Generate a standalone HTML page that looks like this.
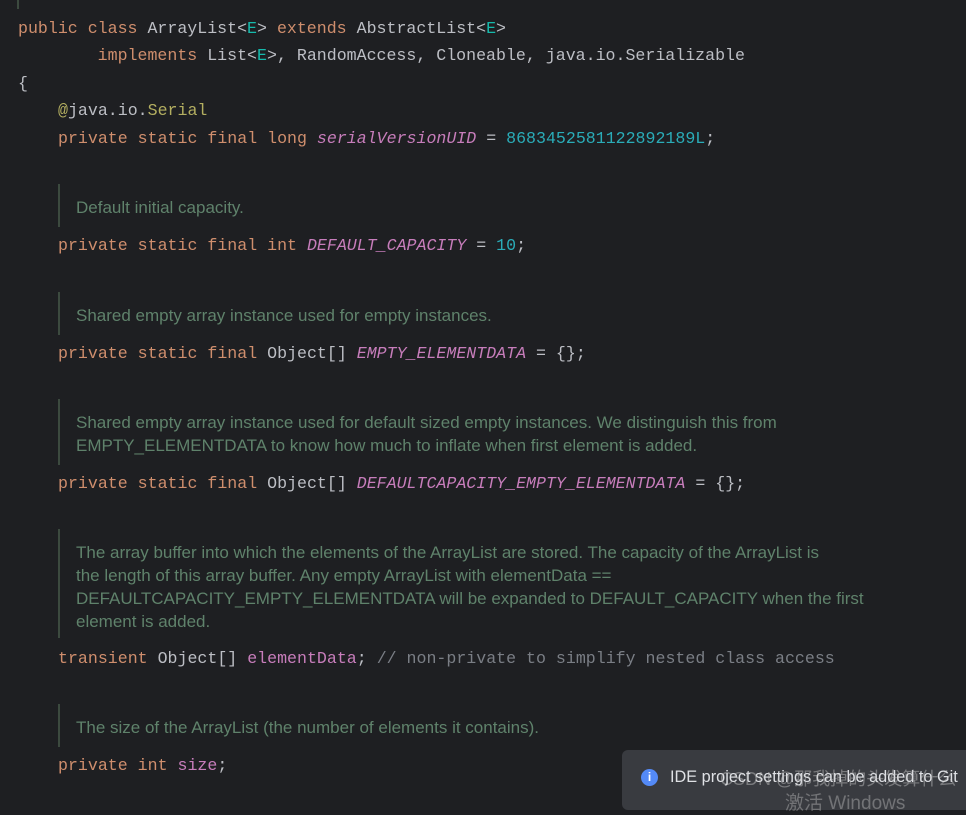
<!DOCTYPE html>
<html><head><meta charset="utf-8"><style>
html,body{margin:0;padding:0;width:966px;height:796px;overflow:hidden;background:#1e1f22;}
.c{position:absolute;font-family:"Liberation Mono",monospace;font-size:16.6px;color:#bcbec4;white-space:pre;line-height:20px;}
.k{color:#cf8e6d}.t{color:#16baac}.a{color:#b3ae60}.i{color:#c77dbb;font-style:italic}.f{color:#c77dbb}.n{color:#2aacb8}.g{color:#7a7e85}
.d{position:absolute;font-family:"Liberation Sans",sans-serif;font-size:17px;color:#5f826b;white-space:pre;line-height:23px;}
.bar{position:absolute;left:58px;width:2px;background:#3c4a3f;}
</style></head><body>
<div style="position:absolute;left:17px;top:0;width:2px;height:9px;background:#3c4a3f"></div>
<div class="c" style="left:18px;top:19px"><span class="k">public class </span>ArrayList&lt;<span class="t">E</span>&gt; <span class="k">extends </span>AbstractList&lt;<span class="t">E</span>&gt;</div>
<div class="c" style="left:18px;top:46px">        <span class="k">implements </span>List&lt;<span class="t">E</span>&gt;, RandomAccess, Cloneable, java.io.Serializable</div>
<div class="c" style="left:18px;top:74px">{</div>
<div class="c" style="left:58px;top:101px"><span class="a">@</span>java.io.<span class="a">Serial</span></div>
<div class="c" style="left:58px;top:129px"><span class="k">private static final long </span><span class="i">serialVersionUID</span> = <span class="n">8683452581122892189L</span>;</div>

<div class="bar" style="top:184px;height:43px"></div>
<div class="d" style="left:76px;top:196px">Default initial capacity.</div>
<div class="c" style="left:58px;top:236px"><span class="k">private static final int </span><span class="i">DEFAULT_CAPACITY</span> = <span class="n">10</span>;</div>

<div class="bar" style="top:292px;height:43px"></div>
<div class="d" style="left:76px;top:304px">Shared empty array instance used for empty instances.</div>
<div class="c" style="left:58px;top:344px"><span class="k">private static final </span>Object[] <span class="i">EMPTY_ELEMENTDATA</span> = {};</div>

<div class="bar" style="top:399px;height:66px"></div>
<div class="d" style="left:76px;top:411px">Shared empty array instance used for default sized empty instances. We distinguish this from
EMPTY_ELEMENTDATA to know how much to inflate when first element is added.</div>
<div class="c" style="left:58px;top:474px"><span class="k">private static final </span>Object[] <span class="i">DEFAULTCAPACITY_EMPTY_ELEMENTDATA</span> = {};</div>

<div class="bar" style="top:529px;height:109px"></div>
<div class="d" style="left:76px;top:541px">The array buffer into which the elements of the ArrayList are stored. The capacity of the ArrayList is
the length of this array buffer. Any empty ArrayList with elementData ==
DEFAULTCAPACITY_EMPTY_ELEMENTDATA will be expanded to DEFAULT_CAPACITY when the first
element is added.</div>
<div class="c" style="left:58px;top:649px"><span class="k">transient </span>Object[] <span class="f">elementData</span>; <span class="g">// non-private to simplify nested class access</span></div>

<div class="bar" style="top:704px;height:43px"></div>
<div class="d" style="left:76px;top:716px">The size of the ArrayList (the number of elements it contains).</div>
<div class="c" style="left:58px;top:756px"><span class="k">private int </span><span class="f">size</span>;</div>

<div style="position:absolute;left:622px;top:750px;width:360px;height:60px;background:#393b40;border-radius:6px;"></div>
<div style="position:absolute;left:641px;top:769px;width:17px;height:17px;border-radius:50%;background:#548af7;color:#fff;font:bold 12px 'Liberation Sans',sans-serif;text-align:center;line-height:17px">i</div>
<div style="position:absolute;left:670px;top:768px;font:16.3px 'Liberation Sans',sans-serif;color:#dfe1e5;white-space:pre">IDE project settings can be added to Git</div>
<div style="position:absolute;left:720px;top:765px;font:18px 'Liberation Sans','Noto Sans CJK SC',sans-serif;color:rgba(200,200,200,0.45);white-space:pre">CSDN @那我掉的头发算什么</div>
<div style="position:absolute;left:785px;top:788px;font:19px 'Liberation Sans','Noto Sans CJK SC',sans-serif;color:rgba(200,200,200,0.4);white-space:pre">激活 Windows</div>
</body></html>
